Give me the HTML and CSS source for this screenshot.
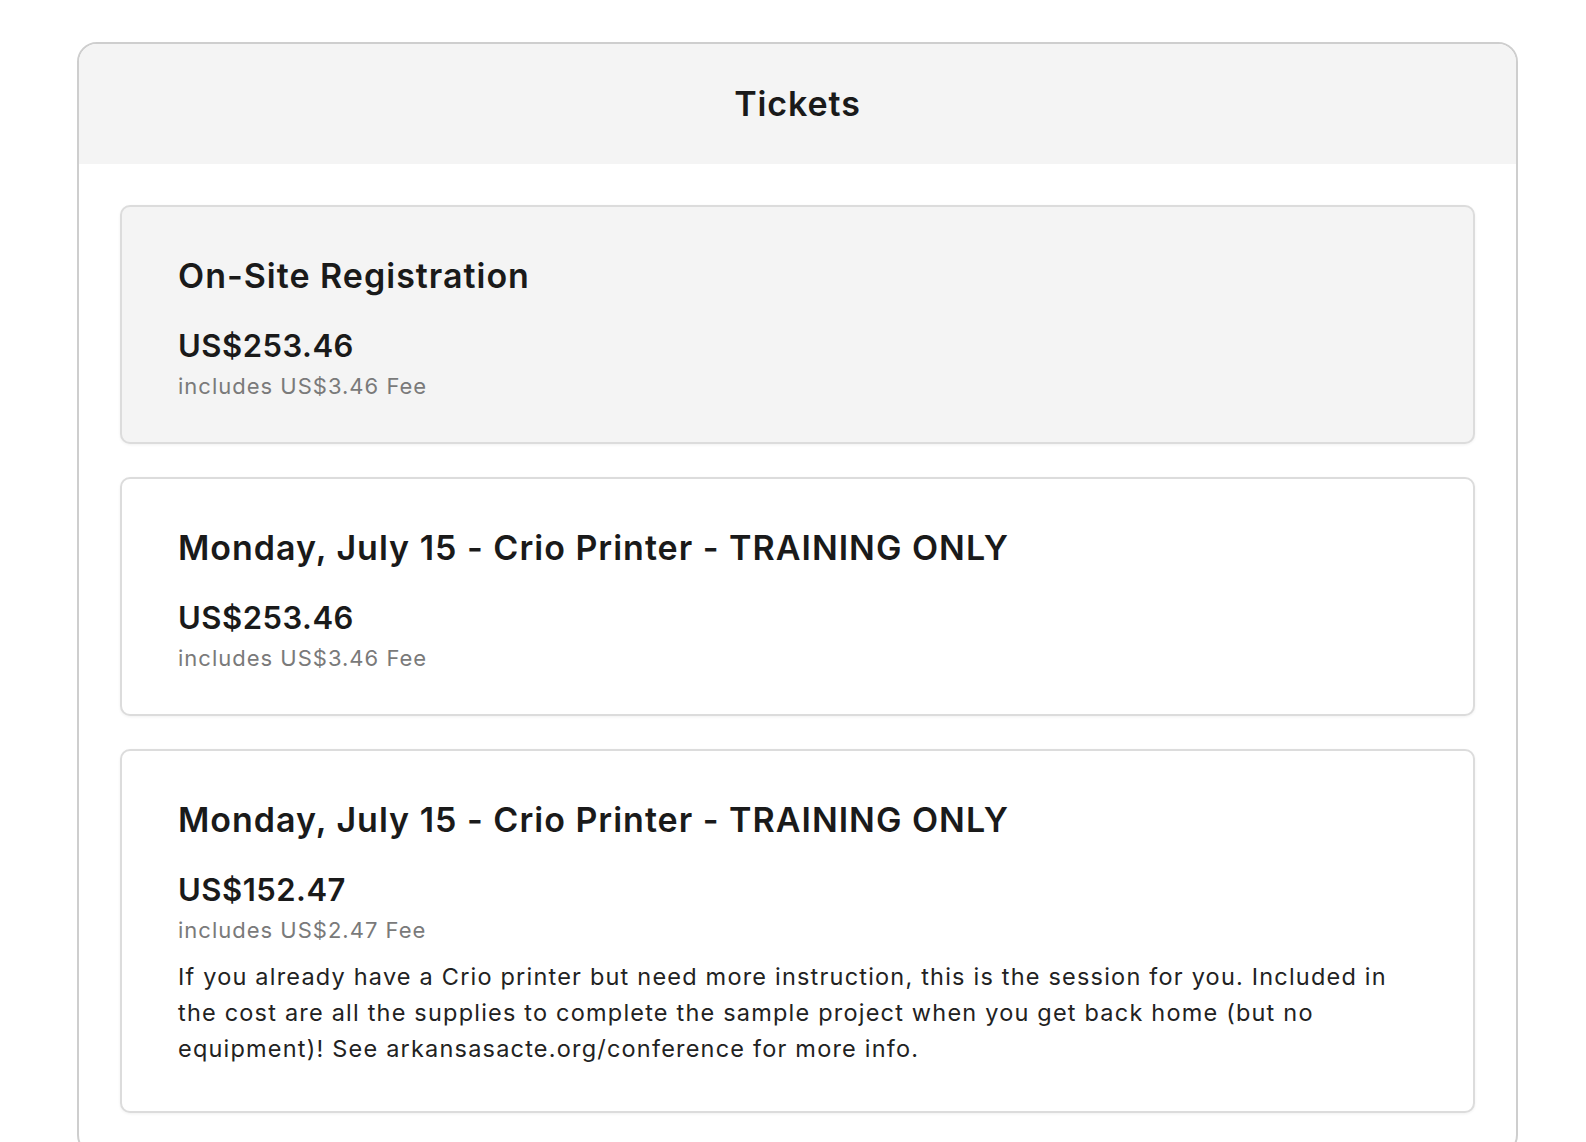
FILE: index.html
```html
<!DOCTYPE html>
<html lang="en">
<head>
<meta charset="utf-8">
<title>Tickets</title>
<link rel="stylesheet" href="styles.css">
</head>
<body>
<section class="panel">
  <header class="panel-header">
    <h1 class="panel-title">Tickets</h1>
  </header>
  <div class="panel-body">
    <article class="ticket ticket-selected">
      <h2 class="ticket-name">On-Site Registration</h2>
      <div class="ticket-price">US$253.46</div>
      <div class="ticket-fee">includes US$3.46 Fee</div>
    </article>
    <article class="ticket">
      <h2 class="ticket-name">Monday, July 15 - Crio Printer - TRAINING ONLY</h2>
      <div class="ticket-price">US$253.46</div>
      <div class="ticket-fee">includes US$3.46 Fee</div>
    </article>
    <article class="ticket">
      <h2 class="ticket-name">Monday, July 15 - Crio Printer - TRAINING ONLY</h2>
      <div class="ticket-price">US$152.47</div>
      <div class="ticket-fee">includes US$2.47 Fee</div>
      <p class="ticket-desc">If you already have a Crio printer but need more instruction, this is the session for you. Included in the cost are all the supplies to complete the sample project when you get back home (but no equipment)! See arkansasacte.org/conference for more info.</p>
    </article>
  </div>
</section>
</body>
</html>
```

FILE: styles.css
```css
html, body {
  margin: 0;
  padding: 0;
  background: #ffffff;
}

body {
  font-family: "Inter", "Noto Sans", "Liberation Sans", sans-serif;
  color: #1a1a1a;
  padding: 42px 0 0 77px;
}

.panel {
  width: 1437px;
  border: 2px solid #cecece;
  border-radius: 20px;
  overflow: hidden;
  background: #ffffff;
}

.panel-header {
  background: #f4f4f4;
  height: 120px;
  display: flex;
  align-items: center;
  justify-content: center;
}

.panel-title {
  margin: 0;
  font-size: 34px;
  font-weight: 600;
  line-height: 44px;
  letter-spacing: 0.9px;
  color: #1a1a1a;
}

.panel-body {
  padding: 41px 41px 40px;
  display: flex;
  flex-direction: column;
  gap: 33px;
}

.ticket {
  border: 2px solid #dcdcdc;
  border-radius: 10px;
  padding: 47px 56px 41px;
  background: #ffffff;
  box-shadow: 0 1px 3px rgba(0, 0, 0, 0.06);
}

.ticket-selected {
  background: #f4f4f4;
}

.ticket-name {
  margin: 0;
  font-size: 34px;
  font-weight: 600;
  line-height: 44px;
  letter-spacing: 1px;
  color: #1a1a1a;
}

.ticket-price {
  margin-top: 28px;
  font-size: 31px;
  font-weight: 600;
  line-height: 40px;
  letter-spacing: 0.5px;
  color: #1a1a1a;
}

.ticket-fee {
  margin-top: 5px;
  font-size: 22px;
  line-height: 30px;
  letter-spacing: 1px;
  color: #7a7a7a;
}

.ticket-desc {
  margin: 14px 0 3px;
  font-size: 23.5px;
  line-height: 36px;
  letter-spacing: 1.2px;
  color: #222222;
  max-width: 1215px;
}
```
